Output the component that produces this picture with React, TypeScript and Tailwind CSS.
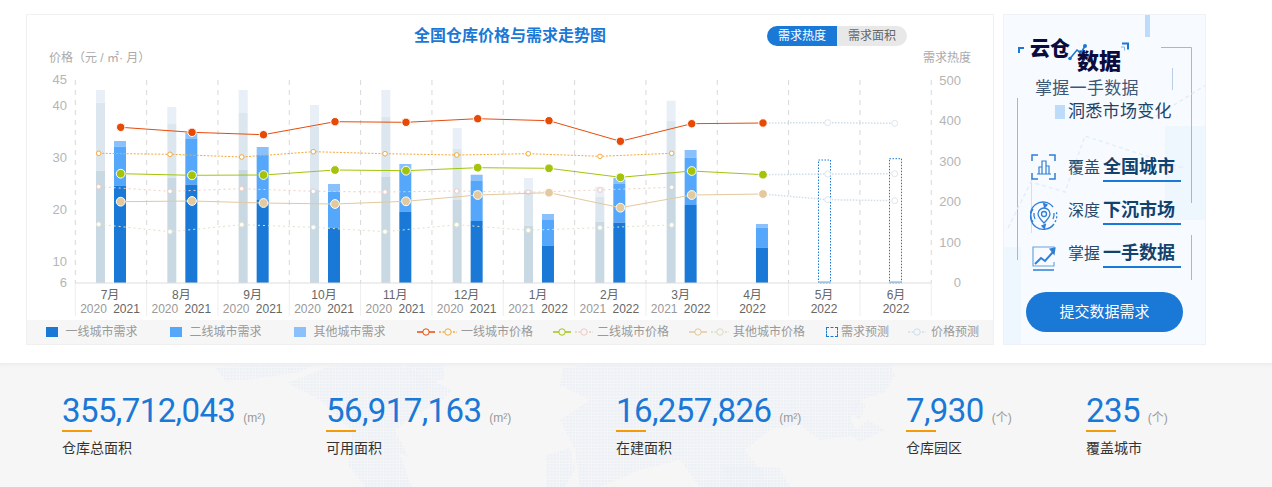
import React from "react";

const STEP = 71.33;
const B1 = "#1a78d6", B2 = "#55a7fb", B3 = "#8ac1fc", G1 = "#c9d9e3", G2 = "#dce6ef", G3 = "#e8eff6";
const BASE = 283;

const bars2020: [number, number, number][] = [
  [170.7, 102.7, 90], [178, 124, 107], [170, 113, 90], [190, 127, 105], [177, 117, 90], [200, 149, 128],
  [225.7, 190, 178], [221.7, 196.7, 186.7], [172, 121, 100.7],
];
const bars2021: [number, number, number][] = [
  [185.7, 146.7, 141], [184.7, 139, 132.7], [200, 155, 147], [227.7, 192, 184], [211.7, 170, 164], [221, 181, 174.7],
  [245.7, 220, 214], [222.7, 184, 178], [205, 157.7, 150], [247.7, 227.7, 224],
];

const xA = [120.7, 192, 263.5, 335, 406, 477.7, 549, 620.4, 691.7, 763];
const xP = [827.7, 894.7];
const xB = [98.7, 170, 241.7, 313.3, 385, 456.7, 528.3, 600, 671.7];

const red = [127.3, 132.3, 134.7, 121.7, 122.3, 118.7, 120.7, 141.3, 123.7, 123];
const green = [173.7, 175.3, 175, 170, 170.7, 167.7, 168.3, 177.3, 171, 174.7];
const tan = [201.7, 201, 203, 204, 201.3, 195, 192.7, 207.7, 195, 194];
const orange = [153.3, 154.3, 157, 151.7, 153.7, 155, 153.7, 156.3, 153.3];
const pink = [186.7, 191.3, 188.7, 191.3, 192, 191, 192.3, 190, 187.3];
const pale = [224.3, 231.7, 224.7, 227.3, 231.7, 224.7, 230.3, 227.7, 225];

const pts = (xs: number[], ys: number[]) => xs.map((x, i) => `${x},${ys[i]}`).join(" ");

const gridX = Array.from({ length: 13 }, (_, i) => 75.3 + STEP * i);
const leftTicks: [string, number][] = [["45", 79], ["40", 105], ["30", 157], ["20", 209], ["10", 261], ["6", 282]];
const rightTicks: [string, number][] = [["500", 80], ["400", 120], ["300", 161], ["200", 201], ["100", 242], ["0", 282]];

const months: [string, string, string][] = [
  ["7月", "2020", "2021"], ["8月", "2020", "2021"], ["9月", "2020", "2021"], ["10月", "2020", "2021"],
  ["11月", "2020", "2021"], ["12月", "2020", "2021"], ["1月", "2021", "2022"], ["2月", "2021", "2022"], ["3月", "2021", "2022"],
];

function Stack({ x, w, tops, colors }: { x: number; w: number; tops: [number, number, number]; colors: string[] }) {
  return (
    <g>
      <rect x={x} y={tops[2]} width={w} height={tops[1] - tops[2]} fill={colors[2]} />
      <rect x={x} y={tops[1]} width={w} height={tops[0] - tops[1]} fill={colors[1]} />
      <rect x={x} y={tops[0]} width={w} height={BASE - tops[0]} fill={colors[0]} />
    </g>
  );
}

function Chart() {
  return (
    <svg width={966} height={252} viewBox="27 68 966 252" className="block">
      {gridX.map((x, i) => (
        <line key={i} x1={x} x2={x} y1={80} y2={BASE} stroke="#d8d8d8" strokeWidth={1} strokeDasharray="5 5" />
      ))}
      {gridX.map((x, i) => (
        <line key={"s" + i} x1={x} x2={x} y1={BASE} y2={316} stroke="#eeeeee" strokeWidth={1} />
      ))}
      {bars2020.map((t, i) => (
        <Stack key={i} x={96 + STEP * i} w={9} tops={t} colors={[G1, G2, G3]} />
      ))}
      {bars2021.map((t, i) => (
        <Stack key={i} x={114 + STEP * i} w={12} tops={t} colors={[B1, B2, B3]} />
      ))}
      {[[818.5, 160], [889.5, 158.7]].map(([x, y], i) => (
        <g key={i}>
          <rect x={x} y={y} width={12} height={BASE - y} fill="none" stroke="#1a78d6" strokeWidth={1} strokeDasharray="1.5 1.5" />
          <rect x={x} y={281.5} width={12} height={1.5} fill="#6fa8e0" />
        </g>
      ))}
      <line x1={75} x2={931} y1={BASE} y2={BASE} stroke="#dddddd" strokeWidth={1} />

      {/* previous-year dotted lines */}
      <polyline points={pts(xB, pale)} fill="none" stroke="#dfe3c8" strokeWidth={1} strokeDasharray="2 3" />
      <polyline points={pts(xB, pink)} fill="none" stroke="#efcfc4" strokeWidth={1} strokeDasharray="2 3" />
      <polyline points={pts(xB, orange)} fill="none" stroke="#f5a93a" strokeWidth={1} strokeDasharray="2 1.5" />
      {xB.map((x, i) => <circle key={"p" + i} cx={x} cy={pale[i]} r={2.3} fill="#fff" stroke="#e2e4cc" />)}
      {xB.map((x, i) => <circle key={"k" + i} cx={x} cy={pink[i]} r={2.3} fill="#fff" stroke="#eecbc0" />)}
      {xB.map((x, i) => <circle key={"o" + i} cx={x} cy={orange[i]} r={2.3} fill="#fff" stroke="#f5a93a" />)}

      {/* forecast */}
      {[[red[9], 122.7, 123.3], [green[9], 174, 173.7], [tan[9], 199.7, 200.7]].map((s, i) => (
        <g key={i}>
          <polyline points={`763,${s[0]} ${xP[0]},${s[1]} ${xP[1]},${s[2]}`} fill="none" stroke="#cfdfea" strokeWidth={1.5} strokeDasharray="1.5 1.5" />
          <circle cx={xP[0]} cy={s[1]} r={3} fill="#fff" stroke="#dbe7f1" />
          <circle cx={xP[1]} cy={s[2]} r={3} fill="#fff" stroke="#dbe7f1" />
        </g>
      ))}

      {/* current lines */}
      <polyline points={pts(xA, tan)} fill="none" stroke="#e3c99d" strokeWidth={1} />
      <polyline points={pts(xA, green)} fill="none" stroke="#a4c40c" strokeWidth={1} />
      <polyline points={pts(xA, red)} fill="none" stroke="#e64c0c" strokeWidth={1} />
      {xA.map((x, i) => <circle key={"t" + i} cx={x} cy={tan[i]} r={4.4} fill="#e3c99d" stroke="#fff" />)}
      {xA.map((x, i) => <circle key={"g" + i} cx={x} cy={green[i]} r={4.4} fill="#a4c40c" stroke="#fff" />)}
      {xA.map((x, i) => <circle key={"r" + i} cx={x} cy={red[i]} r={4.2} fill="#e64a05" stroke="#fff" />)}

      {/* axes */}
      <g fontSize={13} fill="#b5b5b5">
        {leftTicks.map(([t, y]) => (
          <text key={t} x={67} y={y + 4.5} textAnchor="end">{t}</text>
        ))}
        {rightTicks.map(([t, y]) => (
          <text key={t} x={961} y={y + 4.5} textAnchor="end">{t}</text>
        ))}
      </g>
      <g fontSize={12} textAnchor="middle">
        {months.map(([m, a, b], i) => (
          <g key={m}>
            <text x={110 + STEP * i} y={298.5} fill="#666666">{m}</text>
            <text x={93.5 + STEP * i} y={313} fill="#999999">{a}</text>
            <text x={126.5 + STEP * i} y={313} fill="#666666">{b}</text>
          </g>
        ))}
        {[["4月", 752.5], ["5月", 824], ["6月", 896]].map(([m, x]) => (
          <g key={m as string}>
            <text x={x as number} y={298.5} fill="#666666">{m}</text>
            <text x={x as number} y={313} fill="#666666">2022</text>
          </g>
        ))}
      </g>
    </svg>
  );
}

function LineKey({ color, dotted }: { color: string; dotted?: boolean }) {
  return (
    <svg width={18} height={10} viewBox="0 0 18 10" className="shrink-0">
      <line x1={0} x2={18} y1={5} y2={5} stroke={color} strokeWidth={dotted ? 1.5 : 1.5} strokeDasharray={dotted ? "2 1.5" : undefined} />
      <circle cx={9} cy={5} r={3.2} fill="#f6f6f6" stroke={color} strokeWidth={1} />
    </svg>
  );
}

function Legend() {
  const Box = ({ c }: { c: string }) => <span className="w-3 h-2.5 shrink-0" style={{ background: c }} />;
  return (
    <div className="h-[25px] bg-[#f6f6f6] flex items-center pl-[19px] text-xs text-[#999999] whitespace-nowrap">
      <div className="flex items-center w-[124px]"><Box c={B1} /><span className="ml-[5px]"><Box c={G1} /></span><span className="ml-[2.5px]">一线城市需求</span></div>
      <div className="flex items-center w-[124px]"><Box c={B2} /><span className="ml-[5px]"><Box c={G2} /></span><span className="ml-[2.5px]">二线城市需求</span></div>
      <div className="flex items-center w-[123px]"><Box c={B3} /><span className="ml-[5px]"><Box c={G3} /></span><span className="ml-[2.5px]">其他城市需求</span></div>
      <div className="flex items-center w-[136px] gap-1"><LineKey color="#e64c0c" /><LineKey color="#f5a93a" dotted /><span>一线城市价格</span></div>
      <div className="flex items-center w-[136px] gap-1"><LineKey color="#a4c40c" /><LineKey color="#eecbc0" dotted /><span>二线城市价格</span></div>
      <div className="flex items-center w-[137px] gap-1"><LineKey color="#e3c99d" /><LineKey color="#dcdcc0" dotted /><span>其他城市价格</span></div>
      <div className="flex items-center w-[82px]"><span className="w-3 h-2.5 border border-dashed border-[#1a78d6] shrink-0" /><span className="ml-[3px]">需求预测</span></div>
      <div className="flex items-center gap-[5px]"><LineKey color="#cfdfea" dotted /><span>价格预测</span></div>
    </div>
  );
}

function Logo() {
  return (
    <svg width={115} height={37} viewBox="1015 35 115 37" className="block ml-3">
      <text x={1029} y={56} fontSize={20} fontWeight={900} fill="#0b0b3f">云仓</text>
      <text x={1076} y={69} fontSize={22} fontWeight={900} fill="#0b0b3f">数据</text>
      <path d="M1018 53v-5h5" fill="none" stroke="#1a78d6" strokeWidth={2} />
      <path d="M1121 43.5h6v6" fill="none" stroke="#1a78d6" strokeWidth={2} />
      <path d="M1120 47h3.5v3.5" fill="none" stroke="#7db8f0" strokeWidth={1} />
      <path d="M1069 58.5L1076 50L1080 53L1084 46" fill="none" stroke="#1a78d6" strokeWidth={1.6} />
      <circle cx={1069} cy={58.5} r={1.8} fill="#1a78d6" />
      <circle cx={1084} cy={46} r={2} fill="#1a78d6" />
    </svg>
  );
}

function IconCity() {
  return (
    <svg width={33} height={31} viewBox="0 0 33 31" fill="none" stroke="#2f7fd6" strokeWidth={1.2} className="shrink-0">
      <path d="M2 10V4h6M19 4h6v6M25 22v6h-6M8 28H2v-6" strokeWidth={1.5} />
      <path d="M9 23v-7h3v7M12 23V10h4v13M16 23v-8h3v8M7 23h14" />
    </svg>
  );
}
function IconPin() {
  return (
    <svg width={33} height={31} viewBox="0 0 33 31" fill="none" stroke="#2f7fd6" strokeWidth={1.3} className="shrink-0 -ml-px mt-1.5">
      <path d="M24 7A12.5 12.5 0 0 0 4 22" strokeDasharray="30 2" />
      <path d="M14 3l4 2-3 3" fill="#2f7fd6" />
      <path d="M4 9A12.5 12.5 0 0 0 25 24" />
      <path d="M26 22a12.5 12.5 0 0 0 1-11" strokeDasharray="2 2" />
      <path d="M16 29l-3-3 4-2" fill="#2f7fd6" />
      <path d="M15 23c-4-4-6-6-6-9a6 6 0 0 1 12 0c0 3-2 5-6 9z" />
      <circle cx={15} cy={14} r={2.5} />
      <path d="M6 19a10 10 0 0 1-1-6M24 19a10 10 0 0 0 1-6" />
    </svg>
  );
}
function IconTrend() {
  return (
    <svg width={33} height={31} viewBox="0 0 33 31" fill="none" stroke="#2f7fd6" strokeWidth={1.2} className="shrink-0 mt-1">
      <path d="M24 8V6H3v19h21v-4" stroke="#6aa4e2" />
      <path d="M3 29h21" strokeWidth={1.5} />
      <path d="M5 23l6-6 4 3 8-9" strokeWidth={2} />
      <path d="M20 8l5-1-1 6z" fill="#2f7fd6" />
    </svg>
  );
}

function Row({ icon, a, b }: { icon: React.ReactNode; a: string; b: string }) {
  return (
    <div className="flex h-[31px] ml-[26px]">
      <div className="w-[38px] flex items-start">{icon}</div>
      <div className="text-base text-[#2a4a6a] leading-[34px] w-[35px]">{a}</div>
      <div className="w-[78px] border-b-2 border-[#1a78d6] text-lg font-bold text-[#12426e] leading-[32px] whitespace-nowrap">{b}</div>
    </div>
  );
}

function Panel() {
  return (
    <div className="relative w-[203px] h-[331px] bg-[#f7fbff] border border-[#eef1f5] overflow-hidden">
      <svg width={203} height={331} viewBox="1003 14 203 331" className="absolute left-[-1px] top-[-1px]">
        <rect x={1145} y={14} width={5} height={23} fill="#bddcfa" />
        <rect x={1165} y={126} width={41} height={94} fill="#eef6fe" />
        <rect x={1003} y={247} width={18} height={98} fill="#eef6fe" />
        <path d="M1161 47.5H1191.5V203M1191.5 235V280" fill="none" stroke="#9fb9da" />
        <path d="M1017.5 98V260" fill="none" stroke="#9fb9da" />
        <path d="M1172.5 68V90" fill="none" stroke="#b9cee6" />
        <path d="M1031.5 177V233" fill="none" stroke="#cfe0f0" />
        <path d="M1008 228L1031 182L1065 192L1085 136L1183 168M1150 120L1206 85" fill="none" stroke="#e2eefa" strokeWidth={1.5} strokeDasharray="4 3" />
      </svg>
      <div className="relative">
        <div className="pt-[20px]"><Logo /></div>
        <div className="mt-[7px] ml-[31px] text-[17px] leading-[20px] tracking-[0.3px] text-[#3d5777]">掌握一手数据</div>
        <div className="mt-[3px] ml-[51px] flex items-center text-[17px] leading-[20px] tracking-[0.3px] text-[#1f4468]">
          <span className="w-2.5 h-3.5 bg-[#bddcfa] mr-[3px]" />洞悉市场变化
        </div>
        <div className="mt-[29px] flex flex-col gap-3">
          <Row icon={<IconCity />} a="覆盖" b="全国城市" />
          <Row icon={<IconPin />} a="深度" b="下沉市场" />
          <Row icon={<IconTrend />} a="掌握" b="一手数据" />
        </div>
        <div className="mt-6 ml-[22px] w-[157px] h-10 rounded-full bg-[#1a78d6] text-white text-[15px] flex items-center justify-center">提交数据需求</div>
      </div>
    </div>
  );
}

function Stat({ w, n, u, l }: { w: string; n: string; u: string; l: string }) {
  return (
    <div className={w}>
      <div className="flex items-baseline h-[39px] leading-[39px] whitespace-nowrap">
        <span className="text-[33px] text-[#1a78d6] tracking-[-0.6px] font-['Roboto',sans-serif]">{n}</span>
        <span className="ml-2 text-xs text-[#999999]">{u}</span>
      </div>
      <div className="w-[30px] h-0.5 bg-[#f29c0a]" />
      <div className="mt-[6px] text-sm leading-[20px] text-[#333333]">{l}</div>
    </div>
  );
}

function WorldDots() {
  return (
    <svg width={1272} height={124} viewBox="0 363 1272 124" className="absolute left-0 top-0">
      <defs>
        <pattern id="dots" x="0" y="0" width="3.2" height="3.2" patternUnits="userSpaceOnUse">
          <rect width="2.2" height="2.2" fill="#eaeff8" />
        </pattern>
      </defs>
      <g fill="url(#dots)">
        <polygon points="215,368 262,363 318,363 300,372 262,378 226,382" />
        <polygon points="287,383 330,366 395,363 415,372 452,390 440,402 415,415 395,430 408,456 385,450 345,425 320,400" />
        <polygon points="405,363 442,363 445,378 425,388 410,376" />
        <polygon points="352,430 400,455 412,487 365,487 348,465" />
        <polygon points="546,455 570,448 575,470 565,487 546,487" />
        <polygon points="563,368 610,363 890,363 895,375 885,392 862,400 850,420 860,435 820,440 800,425 770,430 745,450 760,470 770,487 700,487 680,460 640,470 600,487 580,487 575,450 560,420 590,400 560,385" />
        <polygon points="856,400 866,405 860,420 853,415" />
        <polygon points="868,420 885,430 860,442 850,435" />
        <polygon points="720,465 780,468 790,487 730,487" />
      </g>
    </svg>
  );
}

export default function App() {
  return (
    <div className="w-[1272px] h-[487px] overflow-hidden bg-white font-['Liberation_Sans','Noto_Sans_CJK_SC',sans-serif]">
      <div className="h-[363px] pl-[26px] pt-[14px] flex gap-[9px] items-start">
        <div className="w-[968px] h-[331px] border border-[#f0f0f0] bg-white flex flex-col">
          <div className="grid grid-cols-[1fr_auto_1fr] items-center pt-[10px]">
            <div />
            <div className="text-base font-bold text-[#1a78d6] leading-[22px]">全国仓库价格与需求走势图</div>
            <div className="flex justify-end pr-[86px]">
              <div className="flex h-5 w-[140px] rounded-full overflow-hidden text-xs leading-5 text-center">
                <span className="w-[70px] bg-[#1a78d6] text-white">需求热度</span>
                <span className="w-[70px] bg-[#e8e8e8] text-[#666666]">需求面积</span>
              </div>
            </div>
          </div>
          <div className="flex justify-between pl-[22px] pr-[22px] mt-[4px] h-[14px] text-xs leading-[14px] text-[#aaaaaa]">
            <span>价格（元 / ㎡· 月）</span>
            <span>需求热度</span>
          </div>
          <div className="mt-[3px]"><Chart /></div>
          <Legend />
        </div>
        <Panel />
      </div>
      <div className="relative h-[124px] bg-[#f6f6f6] shadow-[inset_0_6px_6px_-6px_rgba(0,0,0,0.08)]">
        <WorldDots />
        <div className="relative flex pl-[62px] pt-[28px]">
          <Stat w="w-[264px]" n="355,712,043" u="(m²)" l="仓库总面积" />
          <Stat w="w-[290px]" n="56,917,163" u="(m²)" l="可用面积" />
          <Stat w="w-[290px]" n="16,257,826" u="(m²)" l="在建面积" />
          <Stat w="w-[180px]" n="7,930" u="(个)" l="仓库园区" />
          <Stat w="w-[150px]" n="235" u="(个)" l="覆盖城市" />
        </div>
      </div>
    </div>
  );
}
